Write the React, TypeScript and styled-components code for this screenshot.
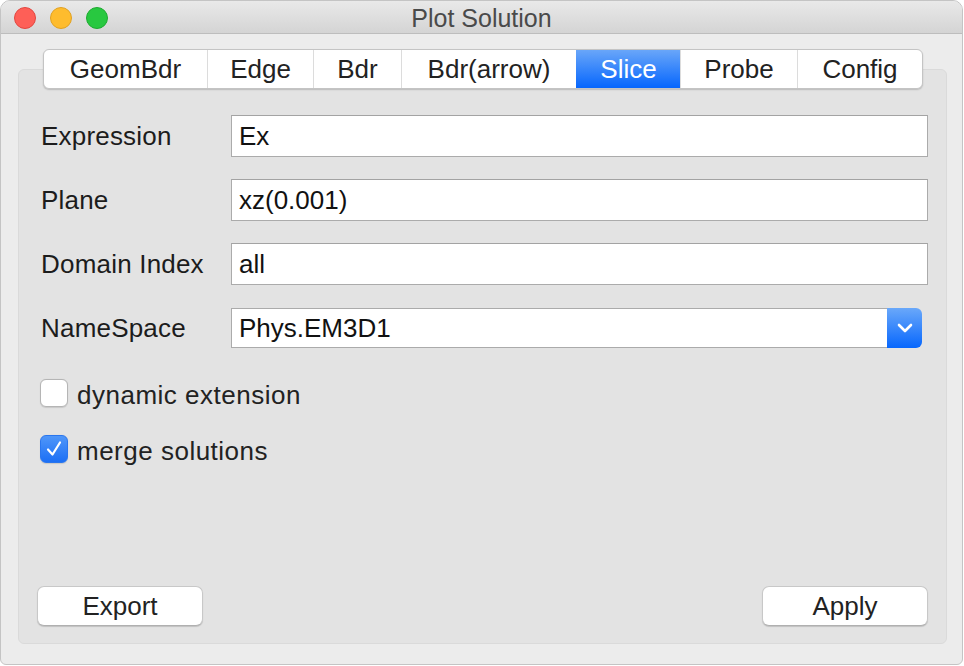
import React from "react";
import styled, { createGlobalStyle } from "styled-components";

const Global = createGlobalStyle`
  html, body { margin: 0; padding: 0; background: #ffffff; }
  body { font-family: "Liberation Sans", Arial, sans-serif; }
  * { box-sizing: border-box; }
`;

const Window = styled.div`
  width: 963px;
  height: 665px;
  background: #ececec;
  border: 1px solid #c4c4c4;
  border-radius: 10px 10px 6px 6px;
  overflow: hidden;
  display: flex;
  flex-direction: column;
`;

const TitleBar = styled.div`
  height: 33px;
  flex: none;
  position: relative;
  display: flex;
  align-items: center;
  justify-content: center;
  background: linear-gradient(#e9e9e9, #d4d4d4);
  border-bottom: 1px solid #bdbdbd;
`;

const Lights = styled.div`
  position: absolute;
  left: 13px;
  top: 6px;
  display: flex;
  gap: 14px;
`;

const Light = styled.span<{ $fill: string; $edge: string }>`
  width: 22px;
  height: 22px;
  border-radius: 50%;
  background: ${(p) => p.$fill};
  border: 1px solid ${(p) => p.$edge};
`;

const Title = styled.div`
  font-size: 25px;
  color: #4a4a4a;
  margin-top: 2px;
`;

const Body = styled.div`
  flex: 1;
  display: flex;
  flex-direction: column;
  padding: 15px 15px 20px 17px;
`;

const TabBar = styled.div`
  align-self: center;
  margin-left: 1px;
  display: flex;
  height: 40px;
  background: #ffffff;
  border: 1px solid #c4c4c4;
  border-radius: 6px;
  box-shadow: 0 1px 1.5px rgba(0, 0, 0, 0.18);
  overflow: hidden;
  position: relative;
  z-index: 1;
  margin-bottom: -20px;
`;

const Tab = styled.div<{ $w: number; $active?: boolean }>`
  width: ${(p) => p.$w}px;
  display: flex;
  align-items: center;
  justify-content: center;
  font-size: 26px;
  color: ${(p) => (p.$active ? "#ffffff" : "#222222")};
  background: ${(p) => (p.$active ? "linear-gradient(#69a6f9, #0666fd)" : "transparent")};
  border-left: 1px solid ${(p) => (p.$active ? "transparent" : "#dcdcdc")};
  &:first-child { border-left: none; }
`;

const Pane = styled.div`
  flex: 1;
  background: #e3e3e3;
  border: 1px solid #dadada;
  border-radius: 6px;
  display: flex;
  flex-direction: column;
  padding: 45px 18px 17px 22px;
`;

const Form = styled.div`
  display: grid;
  grid-template-columns: 190px 1fr;
  grid-auto-rows: 42px;
  row-gap: 22px;
  align-items: center;
`;

const Label = styled.div`
  font-size: 26px;
  letter-spacing: 0.2px;
  color: #1c1c1c;
`;

const Field = styled.div`
  height: 42px;
  background: #ffffff;
  border: 1px solid #ababab;
  border-top-color: #a3a3a3;
  display: flex;
  align-items: center;
  padding-left: 7px;
  font-size: 26px;
  color: #111111;
`;

const Combo = styled.div`
  height: 40px;
  margin-right: 6px;
  display: flex;
  align-items: stretch;
`;

const ComboText = styled.div`
  flex: 1;
  background: #ffffff;
  border: 1px solid #ababab;
  border-right: none;
  display: flex;
  align-items: center;
  padding-left: 7px;
  font-size: 26px;
  color: #111111;
`;

const ComboButton = styled.div`
  width: 35px;
  border-radius: 0 6px 6px 0;
  background: linear-gradient(#6aa8fa, #0767fd);
  display: flex;
  align-items: center;
  justify-content: center;
`;

const Checks = styled.div`
  display: flex;
  flex-direction: column;
  gap: 28px;
  margin-top: 30px;
`;

const CheckRow = styled.div`
  display: flex;
  align-items: center;
  gap: 9px;
  height: 28px;
  margin-left: -1px;
`;

const CheckText = styled.span`
  font-size: 26px;
  line-height: 30px;
  padding-top: 3px;
  letter-spacing: 0.5px;
  color: #222222;
`;

const Box = styled.div<{ $on?: boolean }>`
  width: 28px;
  height: 28px;
  flex: none;
  border-radius: 6px;
  display: flex;
  align-items: center;
  justify-content: center;
  background: ${(p) => (p.$on ? "linear-gradient(#4f96f9, #1c6ff5)" : "#ffffff")};
  border: 1px solid ${(p) => (p.$on ? "#2a76ee" : "#b5b5b5")};
  box-shadow: 0 0.5px 1px rgba(0, 0, 0, 0.12);
`;

const Spacer = styled.div`
  flex: 1;
`;

const Footer = styled.div`
  display: flex;
  justify-content: space-between;
  margin-left: -4px;
  margin-right: 0;
`;

const Button = styled.div`
  width: 166px;
  height: 40px;
  background: #ffffff;
  border: 1px solid #c8c8c8;
  border-bottom-color: #b0b0b0;
  border-radius: 7px;
  box-shadow: 0 1px 1px rgba(0, 0, 0, 0.15);
  display: flex;
  align-items: center;
  justify-content: center;
  font-size: 26px;
  color: #222222;
`;

const tabs = [
  { label: "GeomBdr", w: 163 },
  { label: "Edge", w: 106 },
  { label: "Bdr", w: 88 },
  { label: "Bdr(arrow)", w: 175 },
  { label: "Slice", w: 104, active: true },
  { label: "Probe", w: 117 },
  { label: "Config", w: 125 },
];

const fields = [
  { label: "Expression", value: "Ex" },
  { label: "Plane", value: "xz(0.001)" },
  { label: "Domain Index", value: "all" },
];

export default function App() {
  return (
    <>
      <Global />
      <Window>
        <TitleBar>
          <Lights>
            <Light $fill="#fe5f57" $edge="#e2463f" />
            <Light $fill="#febc2e" $edge="#e0a123" />
            <Light $fill="#28c840" $edge="#1eaa30" />
          </Lights>
          <Title>Plot Solution</Title>
        </TitleBar>
        <Body>
          <TabBar>
            {tabs.map((t) => (
              <Tab key={t.label} $w={t.w} $active={t.active}>
                {t.label}
              </Tab>
            ))}
          </TabBar>
          <Pane>
            <Form>
              {fields.map((f) => (
                <React.Fragment key={f.label}>
                  <Label>{f.label}</Label>
                  <Field>{f.value}</Field>
                </React.Fragment>
              ))}
              <Label>NameSpace</Label>
              <Combo>
                <ComboText>Phys.EM3D1</ComboText>
                <ComboButton>
                  <svg width="16" height="10" viewBox="0 0 16 10">
                    <path d="M2 2 L8 8 L14 2" fill="none" stroke="#ffffff" strokeWidth="2.6" strokeLinecap="round" strokeLinejoin="round" />
                  </svg>
                </ComboButton>
              </Combo>
            </Form>
            <Checks>
              <CheckRow>
                <Box />
                <CheckText>dynamic extension</CheckText>
              </CheckRow>
              <CheckRow>
                <Box $on>
                  <svg width="20" height="20" viewBox="0 0 20 20">
                    <path d="M4 10.5 L8.5 15.5 L16 3.5" fill="none" stroke="#ffffff" strokeWidth="2.2" strokeLinecap="round" strokeLinejoin="round" />
                  </svg>
                </Box>
                <CheckText>merge solutions</CheckText>
              </CheckRow>
            </Checks>
            <Spacer />
            <Footer>
              <Button>Export</Button>
              <Button>Apply</Button>
            </Footer>
          </Pane>
        </Body>
      </Window>
    </>
  );
}
